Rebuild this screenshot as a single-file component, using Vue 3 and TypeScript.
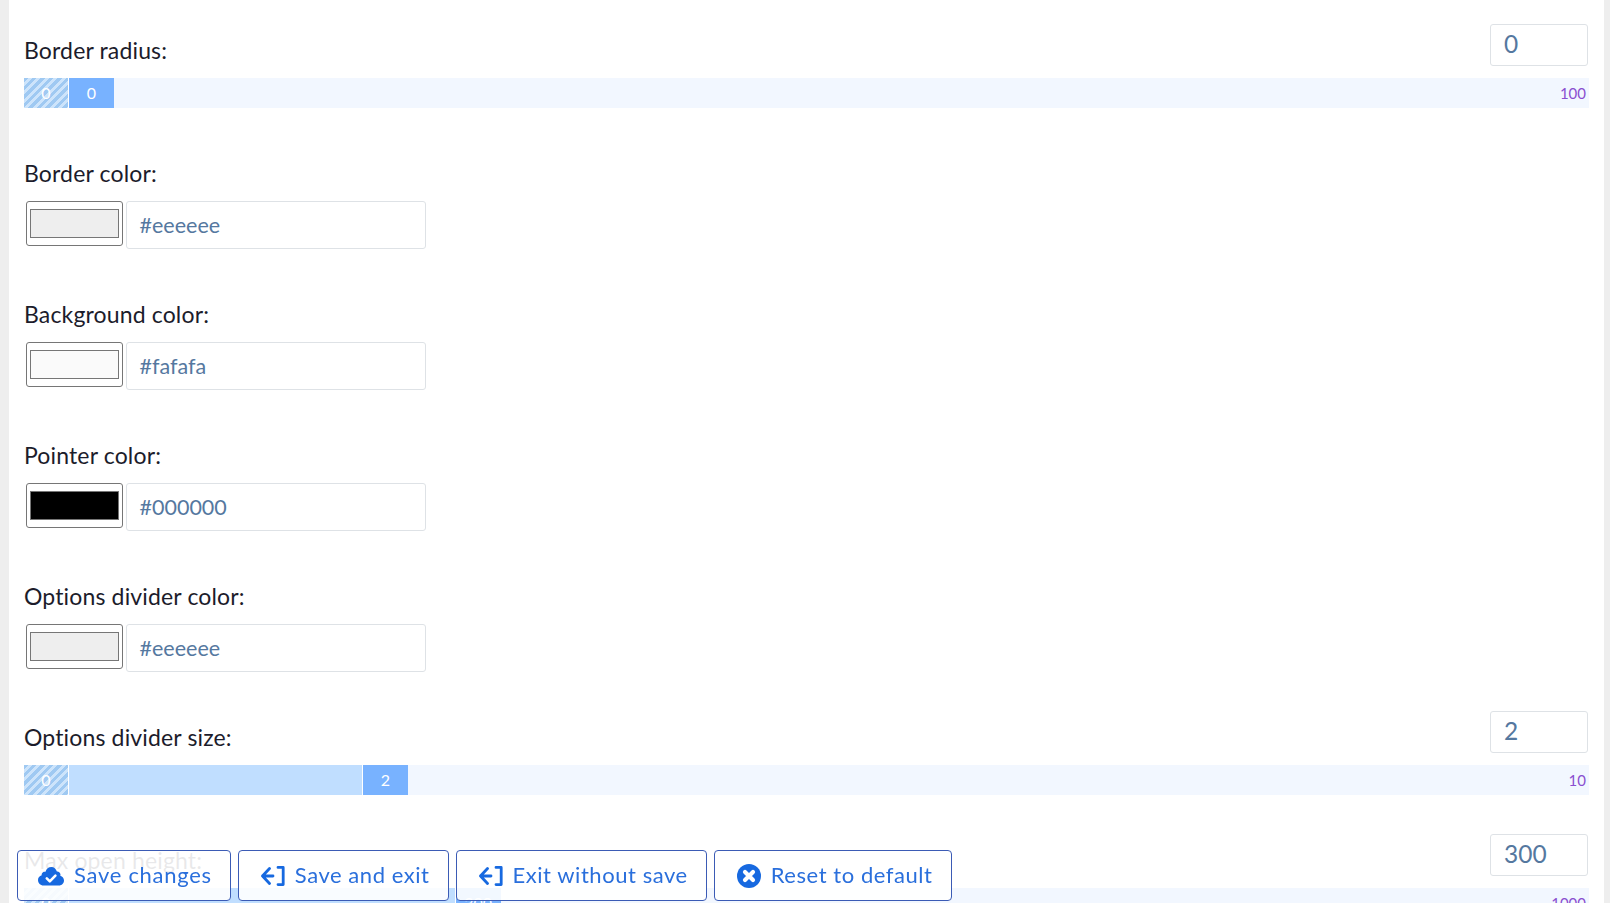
<script setup lang="ts">
interface Field {
  kind: 'range' | 'color'
  label: string
  value: string
  max?: string
  pct?: number
  swatch?: string
}

const fields: Field[] = [
  { kind: 'range', label: 'Border radius:', value: '0', max: '100', pct: 0 },
  { kind: 'color', label: 'Border color:', value: '#eeeeee', swatch: '#eeeeee' },
  { kind: 'color', label: 'Background color:', value: '#fafafa', swatch: '#fafafa' },
  { kind: 'color', label: 'Pointer color:', value: '#000000', swatch: '#000000' },
  { kind: 'color', label: 'Options divider color:', value: '#eeeeee', swatch: '#eeeeee' },
  { kind: 'range', label: 'Options divider size:', value: '2', max: '10', pct: 20 },
  { kind: 'range', label: 'Max open height:', value: '300', max: '1000', pct: 26.3 },
]
</script>

<template>
  <div class="viewport">
    <main class="page">
      <section v-for="f in fields" :key="f.label" class="field">
        <template v-if="f.kind === 'range'">
          <div class="head">
            <span class="label">{{ f.label }}</span>
            <span class="num">{{ f.value }}</span>
          </div>
          <div class="slider">
            <span class="min">0</span>
            <span class="fill" :style="{ width: `calc((100% - 95px) * ${(f.pct ?? 0) / 100})` }"></span>
            <span class="knob">{{ f.value }}</span>
            <span class="max">{{ f.max }}</span>
          </div>
        </template>
        <template v-else>
          <div class="label color-label">{{ f.label }}</div>
          <div class="color-row">
            <span class="swatch-box"><span class="swatch" :style="{ background: f.swatch }"></span></span>
            <span class="hex">{{ f.value }}</span>
          </div>
        </template>
      </section>
    </main>
    <div class="actions">
      <button class="btn first">
        <svg class="ico cloud" viewBox="0 0 26 20"><path fill="currentColor" d="M13.500 1c-3 0-5.200 2-6 4.800C6.800 5.500 6 5.600 5.300 6 4 6.700 3.500 8 3.700 9.300 1.500 10 0 11.700 0 14c0 3 2.400 5.500 5.500 5.500h15.500c2.800 0 5-2.200 5-5 0-2.300-1.500-4.200-3.700-4.800.2-.6.200-1.200.1-1.800C21.900 6.200 20.400 5.200 18.900 5.500 18 3 16 1 13.500 1z"/><path fill="none" stroke="#fff" stroke-width="2.600" stroke-linecap="round" stroke-linejoin="round" d="M8.800 12.300l3 3 5.600-5.600"/></svg>
        Save changes
      </button>
      <button class="btn">
        <svg class="ico exit" viewBox="0 0 24 20" fill="none" stroke="currentColor" stroke-width="2.800" stroke-linecap="round" stroke-linejoin="round"><path d="M12 10H1.500M8.500 2.500 1.500 10l7 7.500M17 1.400h5.200v17.200H17"/></svg>
        Save and exit
      </button>
      <button class="btn">
        <svg class="ico exit" viewBox="0 0 24 20" fill="none" stroke="currentColor" stroke-width="2.800" stroke-linecap="round" stroke-linejoin="round"><path d="M12 10H1.500M8.500 2.500 1.500 10l7 7.500M17 1.400h5.200v17.200H17"/></svg>
        Exit without save
      </button>
      <button class="btn">
        <svg class="ico close" viewBox="0 0 24 24"><circle cx="12" cy="12" r="12" fill="currentColor"/><path fill="none" stroke="#fff" stroke-width="4.200" stroke-linecap="round" d="M8 8l8 8M16 8l-8 8"/></svg>
        Reset to default
      </button>
    </div>
  </div>
</template>

<style scoped>
.viewport { height: 903px; overflow: hidden; background: #eee; font-family: "Lato", "Noto Sans", sans-serif; }
.page { background: #fff; margin: 0 6px 0 9px; padding: 24px 15px 0; }
.field { margin-bottom: 39px; }
.head { display: flex; justify-content: space-between; align-items: flex-end; margin-bottom: 12px; height: 42px; }
.label { display: block; font-size: 23px; letter-spacing: .15px; line-height: 30px; color: #1c1c2b; margin-bottom: 1px; }
.num { box-sizing: border-box; width: 98px; height: 42px; margin-right: 1px; border: 1px solid #dee2e6; border-radius: 3px; padding-left: 13px; font-size: 24.500px; line-height: 38px; color: #55789f; }
.slider { display: flex; height: 30px; background: #f2f7ff; color: #fff; font-size: 16px; line-height: 30px; text-align: center; }
.min { width: 44px; flex: none; border-right: 1px solid #fff; background: repeating-linear-gradient(135deg, #9fc9f2 0 3px, #cde4fb 3px 6px); }
.fill { flex: none; background: #c0deff; }
.knob { width: 45px; flex: none; background: #78b2ff; box-shadow: -1px 0 0 #fff; }
.max { margin-left: auto; padding-right: 3px; font-size: 15px; color: #8a4fd0; }
.color-label { padding-top: 11px; margin-bottom: 13px; }
.color-row { display: flex; gap: 3px; padding-left: 2px; }
.swatch-box { box-sizing: border-box; width: 97px; height: 45px; border: 1px solid #767676; border-radius: 3px; padding: 7px 3px; background: #fff; display: block; }
.swatch { display: block; height: 100%; border: 1px solid #767676; box-sizing: border-box; }
.hex { box-sizing: border-box; width: 300px; height: 48px; border: 1px solid #dee2e6; border-radius: 3px; padding: 0 0 1px 12.500px; font-size: 21.500px; line-height: 46px; color: #55789f; }
.actions { position: fixed; left: 17px; bottom: 2px; display: flex; gap: 7px; }
.btn { box-sizing: border-box; height: 51px; padding: 0 18px 2px 22px; border: 1px solid #3b5bb5; border-radius: 4px; background: rgba(255,255,255,.9); color: #2a6fdc; font: 22px "Lato", sans-serif; letter-spacing: .55px; display: flex; align-items: center; gap: 10px; }
.first { padding-left: 20px; letter-spacing: .72px; }
.ico { flex: none; color: #1769e0; }
.cloud { width: 26px; height: 20px; margin-top: 2px; }
.exit { width: 24px; height: 20px; margin-top: 2px; }
.close { width: 24px; height: 24px; margin-top: 2px; }
</style>
